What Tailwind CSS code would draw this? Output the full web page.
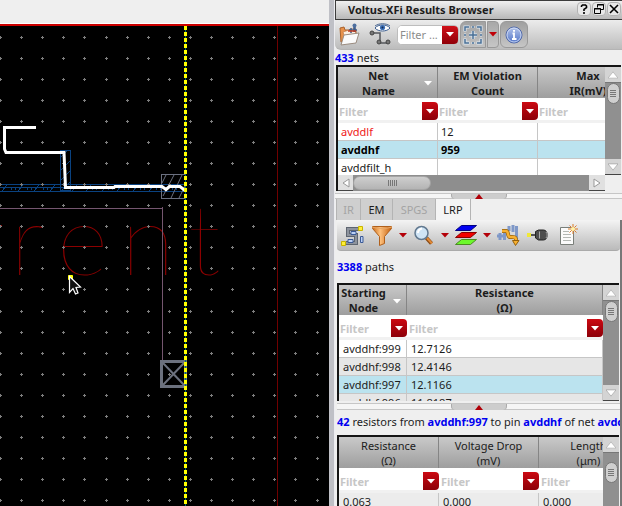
<!DOCTYPE html>
<html lang="en">
<head>
<meta charset="utf-8">
<meta name="viewport" content="width=device-width, initial-scale=1">
<title>Voltus-XFi Results Browser</title>
<script src="https://cdn.jsdelivr.net/npm/@tailwindcss/browser@4"></script>
</head>
<body class="flex h-screen overflow-hidden bg-[#efefef] font-['Noto_Sans',sans-serif] text-[11px] leading-[15px] text-[#1c1c1c]">

<!-- Shared shapes -->
<svg class="hidden" aria-hidden="true">
  <symbol id="down" viewBox="0 0 8 5"><path d="M0 0h8L4 4.500z" fill="currentColor"/></symbol>
  <symbol id="up" viewBox="0 0 8 5"><path d="M0 5h8L4 0z" fill="currentColor"/></symbol>
</svg>

<!-- Layout canvas -->
<main class="flex min-w-0 flex-[329] flex-col">
  <div class="h-6 shrink-0 border-b border-white bg-[#efefef]"></div>
  <div class="h-[2px] shrink-0 bg-[#cc0000]"></div>
  <svg class="min-h-0 w-full flex-1 bg-black" role="img" aria-label="Layout view" fill="none">
    <g transform="translate(0 -26)">
      <path d="M277.500 26V2000" stroke="#700000"/>
      <text x="10 57 121 188" y="275" fill="#8c0000" class="font-['Lato',sans-serif] text-[99px] font-thin">rent</text>
      <path d="M0 225.500h2" stroke="#860000"/>
      <g stroke="#0a4280" shape-rendering="crispEdges">
        <path d="M0 184.500H185M0 187.500H185M0 191.500H185"/>
        <rect x="60.500" y="150.500" width="10" height="40"/>
        <path d="M60 158l8-8M61 170l9-9M61 180l9-9M62 190l8-8M2 191l5-6M18 191l5-6M34 191l5-6M50 191l5-6M72 191l5-6M86 191l5-6M102 191l5-6M117 191l5-6M133 191l5-6M149 191l5-6M11.500 190v-3h4v3M27.500 190v-3h4v3M43.500 190v-3h4v3M92.500 190v-3h4v3M108.500 190v-3h4v3M124.500 190v-3h4v3M140.500 190v-3h4v3M156.500 190v-3h4v3M172.500 190v-3h4v3"/>
      </g>
      <g stroke="#6b7080">
        <rect x="161.500" y="174.500" width="24" height="24"/>
        <path d="M162 183l4-8M163 196l11-21M171 198l11-23M179 198l7-14"/>
      </g>
      <path d="M0 208.500H163M162.500 207V360" stroke="#75566f"/>
      <g id="grid" stroke="#7e7e7e" shape-rendering="crispEdges"></g>
      <path d="M36 127.500H4.500V149l1.500 3.500H64l1.500 35H114l1-1H162l4 3 3.500-3H180l5 4" stroke="#fff" stroke-width="3"/>
      <path d="M161.500 361.500h24v25h-24z" stroke="#6c717e" stroke-width="3"/>
      <path d="M162 362l23 24M185 362l-23 24" stroke="#6c717e" stroke-width="2"/>
      <path d="M185.500 26V2000" stroke="#007070"/>
      <path d="M185.500 26V2000" stroke="#ff0" stroke-width="3" stroke-dasharray="4 2"/>
      <path d="M68.500 275.500h4v4h-4z" stroke="#ff0" fill="#ff0"/>
      <path d="M69.500 276.500v16l3.500-4 2.500 5.500 2.500-1-2-5.500 4.500-.5z" fill="#111" stroke="#fff" stroke-width="1.200"/>
    </g>
  </svg>
</main>

<div class="w-[6px] shrink-0 border-r border-[#ececf0] bg-[#bfc0c6]"></div>

<!-- Results browser -->
<aside class="flex min-w-0 flex-[287] flex-col">
  <header class="flex h-5 shrink-0 items-center border-b border-l border-t border-[#3c3c3c] bg-linear-to-b from-[#f0f0f0] to-[#b8b8b8] pb-[2px] pl-3">
    <h1 class="flex-1 truncate font-bold">Voltus-XFi Results Browser</h1>
    <div class="flex gap-px pr-px">
      <button aria-label="Help" class="size-[14px] rounded-[4px] border border-[#b2b2b2] bg-[#e8e8e8]"><svg viewBox="0 0 12 12" fill="none" stroke="#000" stroke-width="1.600"><path d="M3.500 4V3l1-1h3l1 1v1.500L6 6.500V8M6 9v2"/></svg></button>
      <button aria-label="Float" class="size-[14px] rounded-[4px] border border-[#b2b2b2] bg-[#e8e8e8]"><svg viewBox="0 0 12 12" fill="none" stroke="#000"><path d="M4.500 4.500v-3h6v5h-3M4 2h7M1.500 5.500h6v5h-6zM1 6h7"/></svg></button>
      <button aria-label="Close" class="size-[14px] rounded-[4px] border border-[#b2b2b2] bg-[#e8e8e8]"><svg viewBox="0 0 12 12" fill="none" stroke="#000" stroke-width="1.600"><path d="M2 2l8 8M10 2l-8 8"/></svg></button>
    </div>
  </header>

  <div class="flex h-[30px] shrink-0 items-center rounded-bl-md border-b border-[#b4b4b4] bg-linear-to-b from-[#ececec] to-[#bcbcbc] pl-[3px]">
    <button aria-label="Open results" class="mr-[7px] size-6"><svg viewBox="0 0 24 24" fill="none">
      <path d="M2 5l4-1 1 3h11v12H3z" fill="#e8914a" stroke="#a9622c"/>
      <path d="M5 9l12-4 1 8-10 5z" fill="#fbeee0" stroke="#c07a48" stroke-width=".7"/>
      <path d="M11 7h8M13 10V5M16 9V3M17 2v7" stroke="#3d5c8c" stroke-width="1.500"/><circle cx="16.500" cy="2.500" r="2" fill="#4d6f9f"/><path d="M10 8h8" stroke="#c43b1c" stroke-width="1.500"/>
      <path d="M6 12l15-2-3 10-15 2z" fill="#fafafa" stroke="#9a8c80"/></svg></button>
    <button aria-label="Show nets" class="mr-1 size-6"><svg viewBox="0 0 24 24" fill="none">
      <path d="M3 10h8v10h8" stroke="#55585c" stroke-width="1.500"/><circle cx="3" cy="10" r="2" fill="#777" stroke="#444"/><circle cx="10" cy="19" r="2" fill="#777" stroke="#444"/><circle cx="19" cy="19" r="2" fill="#777" stroke="#444"/>
      <path d="M6 5c3-4 12-4 15 0-3 4-12 4-15 0z" fill="#fff" stroke="#3c5f92"/><circle cx="13.500" cy="4.500" r="2.600" fill="#3d70b8"/><circle cx="13.500" cy="4.500" r="1" fill="#102a50"/><path d="M6 3c4-3 11-3 15 0" stroke="#4a6690"/></svg></button>
    <div class="flex h-5 w-[62px] overflow-hidden rounded-[5px] border border-[#bdbdbd] bg-white">
      <input aria-label="Filter nets" placeholder="Filter ..." class="min-w-0 flex-1 bg-white pl-[2px] outline-none placeholder:text-[#8c8c8c]">
      <button aria-label="Filter options" class="flex w-4 items-center justify-center bg-linear-to-b from-[#d01018] to-[#900008] text-white"><svg class="h-[5px] w-2"><use href="#down"/></svg></button>
    </div>
    <div class="ml-px flex gap-px">
      <button aria-label="Zoom to selection" class="flex h-[27px] w-[26px] items-center justify-center rounded-l-md border border-[#999] bg-linear-to-b from-[#a2a2a2] to-[#c2c2c2]"><svg class="size-5" viewBox="0 0 20 20" fill="none"><path d="M2 6.500V2h4.500M13.500 2H18v4.500M18 13.500V18h-4.500M6.500 18H2v-4.500M10 6v8M6 10h8M10 1v2M10 17v2M1 10h2M17 10h2" stroke="#dfeaf4" stroke-width="3"/><path d="M2 6V2h4M14 2h4v4M18 14v4h-4M6 18H2v-4M10 6v8M6 10h8M10 1v2M10 17v2M1 10h2M17 10h2" stroke="#4a6f94" stroke-width="1.500"/></svg></button>
      <button aria-label="Zoom options" class="flex h-[27px] w-3 items-center justify-center rounded-r border border-[#999] bg-linear-to-b from-[#a8a8a8] to-[#c6c6c6] text-[#c00008]"><svg class="h-[5px] w-2"><use href="#down"/></svg></button>
      <button aria-label="Information" class="flex h-[27px] w-[28px] items-center justify-center rounded-md border border-[#999] bg-linear-to-b from-[#a0a0a0] to-[#c6c6c6]"><svg class="size-[18px]" viewBox="0 0 18 18"><defs><linearGradient id="ball" x2="0" y2="1"><stop stop-color="#b5c5ea"/><stop offset="1" stop-color="#5275c8"/></linearGradient></defs><circle cx="9" cy="9" r="8" fill="url(#ball)" stroke="#5068a8"/><circle cx="9" cy="9" r="7" fill="none" stroke="#dbe4f8" stroke-width=".8"/><path d="M7.500 7.500H9V13M7 13h4.500M8 4.800h2" stroke="#fff" stroke-width="1.800" fill="none"/></svg></button>
    </div>
  </div>

  <p class="h-[15px] shrink-0"><b class="text-[#0000f0]">433</b> nets</p>

  <!-- Nets -->
  <section class="ml-px mr-px shrink-0 border-l-2 border-t-2 border-[#151515]">
    <div class="flex h-[108px]">
      <div class="min-w-0 flex-1 overflow-hidden bg-white">
        <table class="w-[300px] table-fixed border-separate border-spacing-0">
          <thead>
            <tr class="h-[31px] bg-linear-to-b from-[#c9c9c9] to-[#9e9e9e]">
              <th class="relative w-[100px] border-r border-[#858585] pr-[18px]">Net<br>Name<svg class="absolute right-[5px] top-[14px] h-[5px] w-2 text-white"><use href="#down"/></svg></th>
              <th class="w-[100px] border-r border-[#858585]">EM Violation<br>Count</th>
              <th class="w-[100px]">Max<br>IR(mV)</th>
            </tr>
            <tr class="h-[25px]">
              <td class="border-b-[3px] border-[#f1f1f1] pt-1"><div class="flex h-[18px]"><input aria-label="Filter net name" placeholder="Filter" class="min-w-0 flex-1 pl-px font-bold outline-none placeholder:text-[#c6c6c6]"><button aria-label="Net name filter options" class="flex w-4 items-center justify-center rounded-r bg-linear-to-b from-[#cc0a12] to-[#8c0008] text-white"><svg class="h-[5px] w-2"><use href="#down"/></svg></button></div></td>
              <td class="border-b-[3px] border-[#f1f1f1] pt-1"><div class="flex h-[18px]"><input aria-label="Filter violation count" placeholder="Filter" class="min-w-0 flex-1 pl-px font-bold outline-none placeholder:text-[#c6c6c6]"><button aria-label="Violation count filter options" class="flex w-4 items-center justify-center rounded-r bg-linear-to-b from-[#cc0a12] to-[#8c0008] text-white"><svg class="h-[5px] w-2"><use href="#down"/></svg></button></div></td>
              <td class="border-b-[3px] border-[#f1f1f1] pt-1"><div class="flex h-[18px]"><input aria-label="Filter max IR" placeholder="Filter" class="min-w-0 flex-1 pl-px font-bold outline-none placeholder:text-[#c6c6c6]"></div></td>
            </tr>
          </thead>
          <tbody class="[&_td]:h-[18px] [&_td]:border-b [&_td]:border-r [&_td]:border-[#c6c6c6] [&_td]:pl-[3px]">
            <tr><td class="text-[#f01818]">avddlf</td><td>12</td><td></td></tr>
            <tr class="bg-[#bbe3ef] font-bold text-black"><td>avddhf</td><td>959</td><td></td></tr>
            <tr><td>avddfilt_h</td><td></td><td></td></tr>
          </tbody>
        </table>
      </div>
      <div class="flex w-4 flex-col items-center bg-[#909090]">
        <div class="flex h-4 w-full items-center justify-center border-b border-[#777] bg-[#d4d4d4] text-white"><svg class="h-[8px] w-[10px]" viewBox="0 0 8 5"><path d="M0 5h8L4 0z" fill="#fff" stroke="#aaa" stroke-width=".5"/></svg></div>
        <div class="flex h-[21px] w-[13px] flex-col items-center justify-center gap-px rounded-full border border-[#777] bg-[#cfcfcf]"><i class="h-px w-[6px] bg-[#777]"></i><i class="h-px w-[6px] bg-[#777]"></i><i class="h-px w-[6px] bg-[#777]"></i><i class="h-px w-[6px] bg-[#777]"></i></div>
        <div class="mt-auto flex h-4 w-full items-center justify-center border-b border-[#444] bg-[#d4d4d4]"><svg class="h-[8px] w-[10px]" viewBox="0 0 8 5"><path d="M0 0h8L4 5z" fill="#fff" stroke="#999" stroke-width=".5"/></svg></div>
      </div>
    </div>
    <div class="mr-4 flex h-4 items-center bg-[#8e8e8e]">
      <div class="flex h-4 w-[15px] items-center justify-center border-b border-[#444] bg-[#e0e0e0]"><svg class="h-[10px] w-[8px]" viewBox="0 0 8 10"><path d="M7 1v8L1 5z" fill="#fff" stroke="#999"/></svg></div>
      <div class="flex h-[14px] w-[78px] items-center justify-center gap-px rounded-full border border-[#a5a5a5] bg-linear-to-b from-[#cecece] to-[#b4b4b4]"><i class="h-[6px] w-px bg-[#777]"></i><i class="h-[6px] w-px bg-[#777]"></i><i class="h-[6px] w-px bg-[#777]"></i><i class="h-[6px] w-px bg-[#777]"></i><i class="h-[6px] w-px bg-[#777]"></i></div>
      <div class="ml-auto flex h-4 w-4 items-center justify-center border-b border-[#444] bg-[#e0e0e0]"><svg class="h-[10px] w-[8px]" viewBox="0 0 8 10"><path d="M1 1v8L7 5z" fill="#fff" stroke="#999"/></svg></div>
    </div>
  </section>

  <div class="mt-[2px] flex h-[6px] shrink-0 justify-center border-y border-[#c6c6c6] bg-[#f5f5f5]"><button aria-label="Collapse nets" class="flex h-[5px] w-14 items-center justify-center rounded-b border-x border-[#aaa] bg-[#cdcdcd] text-[#b00008]"><svg class="h-[5px] w-2"><use href="#up"/></svg></button></div>

  <!-- Analysis tabs -->
  <nav role="tablist" class="ml-px flex h-[21px] shrink-0 [&>button]:border-r [&>button]:border-[#b4b4b4]">
    <button role="tab" disabled class="w-[25px] border-l bg-[#cfcfcf] text-[#a4a4a4]">IR</button>
    <button role="tab" class="w-8 bg-[#cfcfcf]">EM</button>
    <button role="tab" disabled class="w-[43px] bg-[#cfcfcf] text-[#a4a4a4]">SPGS</button>
    <button role="tab" aria-selected="true" class="w-[35px] bg-[#f4f4f4]">LRP</button>
  </nav>

  <section class="ml-[2px] flex min-h-0 flex-1 flex-col border-r-2 border-[#777]">
    <div class="flex h-[31px] shrink-0 items-center gap-1 rounded-b border-b border-[#aaa] bg-linear-to-b from-[#f4f4f4] to-[#bababa] pl-[2px]">
      <button aria-label="Path endpoints" class="flex w-[26px] justify-center"><svg class="size-6" viewBox="0 0 24 24" fill="none">
        <path d="M19 6H8v6h8v8H6" stroke="#5e6570" stroke-width="4"/><path d="M19 6H8v6h8v8H6" stroke="#8d939d" stroke-width="2"/>
        <path d="M11 8.500h5v3h-5zM8 16.500h5v3H8zM20.500 13.500h2.500v6h-2.500z" fill="#bcd0f4" stroke="#3b5a96"/>
        <path d="M18.500 3.500h4v4h-4zM1.500 18.500h4v4h-4z" fill="#ffef3a" stroke="#c8b400"/></svg></button>
      <div class="flex w-[38px] items-center justify-between pl-px">
        <button aria-label="Filter paths"><svg class="size-6" viewBox="0 0 24 24"><defs><linearGradient id="cone"><stop stop-color="#c96a18"/><stop offset=".4" stop-color="#ffc27e"/><stop offset="1" stop-color="#c4600f"/></linearGradient></defs><path d="M2.500 3.500v2l7 8v9l5-2v-7l7-8v-2z" fill="url(#cone)" stroke="#b0601c"/><path d="M2 4c5 2 15 2 20 0" stroke="#e8a868" fill="none"/></svg></button>
        <button aria-label="Filter menu" class="text-[#b40008]"><svg class="h-[5px] w-2"><use href="#down"/></svg></button>
      </div>
      <div class="flex w-[38px] items-center justify-between pl-px">
        <button aria-label="Search"><svg class="size-6" viewBox="0 0 24 24" fill="none"><path d="M14.500 15l5 5.500" stroke="#8a4a14" stroke-width="4"/><path d="M15 15l5 5.500" stroke="#e08a38" stroke-width="2"/><circle cx="9.500" cy="10" r="6.500" fill="#cfe4f5" stroke="#61788f" stroke-width="1.500"/><path d="M6 10c0-3 1-4 4-4.500" stroke="#fff" stroke-width="2"/></svg></button>
        <button aria-label="Search menu" class="text-[#b40008]"><svg class="h-[5px] w-2"><use href="#down"/></svg></button>
      </div>
      <div class="flex w-[38px] items-center justify-between pl-px">
        <button aria-label="Layers"><svg class="size-6" viewBox="0 0 24 24"><path d="M7.500 2.500h15l-6 5h-15z" fill="#0000f0" stroke="#000080"/><path d="M7.500 9.500h15l-6 5h-15z" fill="#f00000" stroke="#800"/><path d="M7.500 16.500h15l-6 5h-15z" fill="#6cf82c" stroke="#4a8c20"/></svg></button>
        <button aria-label="Layers menu" class="text-[#b40008]"><svg class="h-[5px] w-2"><use href="#down"/></svg></button>
      </div>
      <button aria-label="Trace path" class="flex w-[26px] justify-center"><svg class="size-6" viewBox="0 0 24 24" fill="none"><path d="M1 13h7M4 10v7M8.500 8v9M13 3v5M17 2v7M20.500 3v13" stroke="#7f98c8" stroke-width="3"/><path d="M6 8h4c3 0 1 6 4 6h2c4 0 4 1 4 4" stroke="#94600c" stroke-width="4"/><path d="M6 8h4c3 0 1 6 4 6h2c4 0 4 1 4 4" stroke="#f7b030" stroke-width="2.500"/><path d="M16.500 17.500h6.500l-3.500 5z" fill="#f7b030" stroke="#94600c"/></svg></button>
      <button aria-label="Probe" class="flex w-[26px] justify-center"><svg class="size-6" viewBox="0 0 24 24"><path d="M3 12h8" stroke="#555" stroke-width="2"/><path d="M1 10h4v4H1z" fill="#f0e838"/><path d="M9.500 8.500V15l3 2h5c5 0 5-10 0-10h-5z" fill="#4d4d4d" stroke="#222"/><path d="M13.500 8.500v7M20 9c1.500 2 1.500 4 0 6" stroke="#aaa" fill="none"/></svg></button>
      <button aria-label="New report" class="flex w-[26px] justify-center"><svg class="size-6" viewBox="0 0 24 24" fill="none"><path d="M4.500 4.500h13v17h-13z" fill="#fbfbfb" stroke="#7a7f7a"/><path d="M7 8.500h6M7 11.500h8M7 14.500h8M7 17.500h8" stroke="#b4b8b4"/><path d="M17 1v10M12 6h10M13.500 2.500l7 7M20.500 2.500l-7 7" stroke="#dc7a28"/><circle cx="17" cy="6" r="2" fill="#fff4a8"/></svg></button>
    </div>

    <p class="h-8 shrink-0 leading-[31px]"><b class="text-[#0000f0]">3388</b> paths</p>

    <!-- Paths -->
    <div class="mr-px flex h-[118px] shrink-0 border-l-2 border-t-2 border-[#151515]">
      <div class="min-w-0 flex-1 overflow-hidden bg-white">
        <table class="w-full table-fixed border-separate border-spacing-0">
          <thead>
            <tr class="h-[30px] bg-linear-to-b from-[#c9c9c9] to-[#9e9e9e]">
              <th class="relative w-[68px] border-r border-[#858585] pr-[18px]">Starting<br>Node<svg class="absolute right-[5px] top-[14px] h-[5px] w-2 text-white"><use href="#down"/></svg></th>
              <th class="border-r border-[#858585]">Resistance<br>(Ω)</th>
            </tr>
            <tr class="h-[25px]">
              <td class="border-b-[3px] border-[#f1f1f1] pt-1"><div class="flex h-[18px]"><input aria-label="Filter starting node" placeholder="Filter" class="min-w-0 flex-1 pl-px font-bold outline-none placeholder:text-[#c6c6c6]"><button aria-label="Starting node filter options" class="flex w-4 items-center justify-center rounded-r bg-linear-to-b from-[#cc0a12] to-[#8c0008] text-white"><svg class="h-[5px] w-2"><use href="#down"/></svg></button></div></td>
              <td class="border-b-[3px] border-[#f1f1f1] pt-1"><div class="flex h-[18px]"><input aria-label="Filter resistance" placeholder="Filter" class="min-w-0 flex-1 pl-[2px] font-bold outline-none placeholder:text-[#c6c6c6]"><button aria-label="Resistance filter options" class="flex w-4 items-center justify-center rounded-r bg-linear-to-b from-[#cc0a12] to-[#8c0008] text-white"><svg class="h-[5px] w-2"><use href="#down"/></svg></button></div></td>
            </tr>
          </thead>
          <tbody class="[&_td]:h-[18px] [&_td]:border-b [&_td]:border-r [&_td]:border-[#c6c6c6] [&_td]:pl-1">
            <tr><td>avddhf:999</td><td>12.7126</td></tr>
            <tr class="bg-[#e6e6e6]"><td>avddhf:998</td><td>12.4146</td></tr>
            <tr class="bg-[#bbe3ef]"><td>avddhf:997</td><td>12.1166</td></tr>
            <tr class="bg-[#e6e6e6]"><td>avddhf:996</td><td>11.8187</td></tr>
          </tbody>
        </table>
      </div>
      <div class="flex w-4 flex-col items-center bg-[#909090]">
        <div class="flex h-4 w-full items-center justify-center border-b border-[#777] bg-[#d4d4d4]"><svg class="h-[8px] w-[10px]" viewBox="0 0 8 5"><path d="M0 5h8L4 0z" fill="#fff" stroke="#aaa" stroke-width=".5"/></svg></div>
        <div class="flex h-[21px] w-[13px] flex-col items-center justify-center gap-px rounded-full border border-[#777] bg-[#cfcfcf]"><i class="h-px w-[6px] bg-[#777]"></i><i class="h-px w-[6px] bg-[#777]"></i><i class="h-px w-[6px] bg-[#777]"></i><i class="h-px w-[6px] bg-[#777]"></i></div>
        <div class="mt-auto flex h-4 w-full items-center justify-center border-b border-[#444] bg-[#d4d4d4]"><svg class="h-[8px] w-[10px]" viewBox="0 0 8 5"><path d="M0 0h8L4 5z" fill="#fff" stroke="#999" stroke-width=".5"/></svg></div>
      </div>
    </div>

    <div class="mt-[2px] flex h-[7px] shrink-0 justify-center border-y border-[#c6c6c6] bg-[#f5f5f5]"><button aria-label="Collapse paths" class="flex h-[6px] w-14 items-center justify-center rounded-b border-x border-[#aaa] bg-[#cdcdcd] text-[#b00008]"><svg class="h-[5px] w-2"><use href="#up"/></svg></button></div>

    <p class="h-[25px] shrink-0 overflow-hidden whitespace-nowrap leading-[23px] [&>b]:text-[#0000f0]"><b>42</b> resistors from <b>avddhf:997</b> to pin <b>avddhf</b> of net <b>avddhf</b></p>

    <!-- Resistors -->
    <div class="mr-px flex min-h-0 flex-1 border-l-2 border-t-2 border-[#151515]">
      <div class="min-w-0 flex-1 overflow-hidden bg-white">
        <table class="w-[300px] table-fixed border-separate border-spacing-0">
          <thead>
            <tr class="h-[31px] bg-linear-to-b from-[#c9c9c9] to-[#9e9e9e] [&>th]:border-r [&>th]:border-[#858585] [&>th]:font-normal">
              <th>Resistance<br>(Ω)</th><th>Voltage Drop<br>(mV)</th><th>Length<br>(μm)</th>
            </tr>
            <tr class="h-[25px]">
              <td class="border-b-[3px] border-[#f1f1f1] pt-1"><div class="flex h-[18px]"><input aria-label="Filter resistor resistance" placeholder="Filter" class="min-w-0 flex-1 pl-px font-bold outline-none placeholder:text-[#c6c6c6]"><button aria-label="Resistor resistance filter options" class="flex w-4 items-center justify-center rounded-r bg-linear-to-b from-[#cc0a12] to-[#8c0008] text-white"><svg class="h-[5px] w-2"><use href="#down"/></svg></button></div></td>
              <td class="border-b-[3px] border-[#f1f1f1] pt-1"><div class="flex h-[18px]"><input aria-label="Filter voltage drop" placeholder="Filter" class="min-w-0 flex-1 pl-[2px] font-bold outline-none placeholder:text-[#c6c6c6]"><button aria-label="Voltage drop filter options" class="flex w-4 items-center justify-center rounded-r bg-linear-to-b from-[#cc0a12] to-[#8c0008] text-white"><svg class="h-[5px] w-2"><use href="#down"/></svg></button></div></td>
              <td class="border-b-[3px] border-[#f1f1f1] pt-1"><div class="flex h-[18px]"><input aria-label="Filter length" placeholder="Filter" class="min-w-0 flex-1 pl-[2px] font-bold outline-none placeholder:text-[#c6c6c6]"></div></td>
            </tr>
          </thead>
          <tbody class="[&_td]:h-[18px] [&_td]:border-b [&_td]:border-r [&_td]:border-[#c6c6c6] [&_td]:pl-1">
            <tr class="bg-[#ececec]"><td>0.063</td><td>0.000</td><td>0.000</td></tr>
          </tbody>
        </table>
      </div>
      <div class="flex w-4 flex-col items-center bg-[#909090]">
        <div class="flex h-4 w-full shrink-0 items-center justify-center border-b border-[#777] bg-[#d4d4d4]"><svg class="h-[8px] w-[10px]" viewBox="0 0 8 5"><path d="M0 5h8L4 0z" fill="#fff" stroke="#aaa" stroke-width=".5"/></svg></div>
        <div class="mt-[9px] flex h-[21px] w-[13px] shrink-0 flex-col items-center justify-center gap-px rounded-full border border-[#777] bg-[#cfcfcf]"><i class="h-px w-[6px] bg-[#777]"></i><i class="h-px w-[6px] bg-[#777]"></i><i class="h-px w-[6px] bg-[#777]"></i><i class="h-px w-[6px] bg-[#777]"></i></div>
      </div>
    </div>
  </section>
</aside>

<script>
  // Grid crosses of the layout view
  const grid = document.getElementById('grid');
  let d = '';
  for (let i = 0; i < 100; i++)
    for (let j = 0; j < 60; j++) {
      const x = Math.round(i * 21.1), y = Math.floor(37.1 + j * 21.07);
      d += `M${x - 1} ${y + .5}h3M${x + .5} ${y - 1}v3`;
    }
  const path = document.createElementNS('http://www.w3.org/2000/svg', 'path');
  path.setAttribute('d', d);
  grid.append(path);
</script>
</body>
</html>
